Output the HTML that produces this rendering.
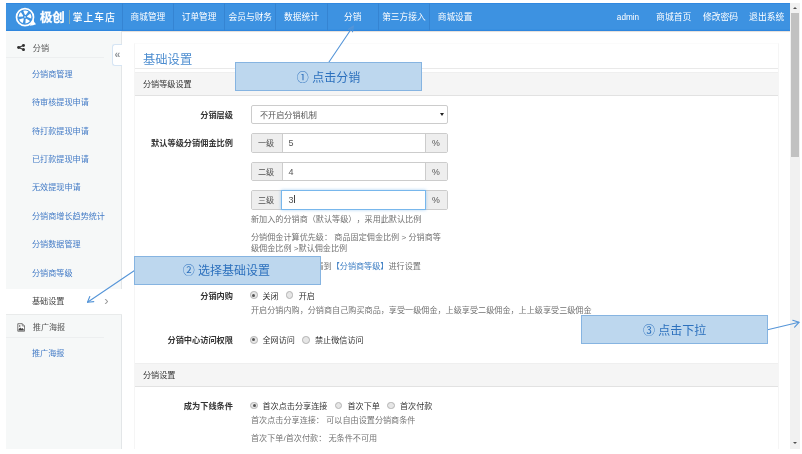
<!DOCTYPE html>
<html lang="zh-CN">
<head>
<meta charset="utf-8">
<title>基础设置</title>
<style>
html,body{margin:0;padding:0;}
body{width:802px;height:454px;overflow:hidden;background:#fff;position:relative;
  font-family:"Liberation Sans","Noto Sans CJK SC",sans-serif;font-size:8.12px;color:#333;text-spacing-trim:space-all;}
.a{position:absolute;}
.t{position:absolute;white-space:nowrap;line-height:12px;height:12px;}
/* header */
#hd{left:6px;top:3px;width:784px;height:28.3px;background:#3d92e1;box-shadow:inset 0 1px 0 #3088e0, inset 0 -1.2px 0 #2f86de, 0 0.6px 0.6px rgba(120,90,60,.18);}
.nv{position:absolute;top:0;height:28px;line-height:29px;width:51.2px;text-align:center;color:#fff;font-size:8.7px;
  border-left:1px solid #3584d2;box-sizing:border-box;white-space:nowrap;}
.nr{position:absolute;top:0;height:28px;line-height:29px;color:#fff;font-size:8.8px;white-space:nowrap;transform:translateX(-50%);}
/* sidebar */
#sb{left:6px;top:31px;width:116px;height:418px;background:#f6f8f8;border-right:1px solid #e3e6e8;box-sizing:border-box;}
.sh{color:#555;font-size:8.12px;left:32px;}
.si{color:#437bc6;font-size:8.12px;left:32px;}
/* main */
.lbl{font-weight:bold;font-size:8.2px;color:#333;text-align:right;width:120px;left:113px;}
.help{color:#737373;font-size:8.12px;left:251px;}
.ph{left:134.5px;width:643.5px;background:#f5f5f5;border-top:1px solid #efefef;border-bottom:1px solid #e2e2e2;box-sizing:border-box;}
.ig{left:251px;width:196.5px;height:19.5px;box-sizing:border-box;border:1px solid #ccc;border-radius:2px;background:#fff;}
.ad{position:absolute;top:0;height:17.5px;line-height:20px;overflow:hidden;text-indent:-1.5px;background:#eee;text-align:center;font-size:8.12px;color:#555;}
.rd{position:absolute;width:5.6px;height:5.6px;border:1px solid #b2b2b2;border-radius:50%;background:#e6e6e6;box-sizing:content-box;}
.rd.on::after{content:"";position:absolute;left:1.3px;top:1.3px;width:3px;height:3px;border-radius:50%;background:#555;}
.co{background:#bdd7ee;border:1px solid #86b4e1;box-sizing:border-box;color:#2c70bd;font-weight:400;font-size:12px;text-align:center;line-height:28px;white-space:nowrap;}
</style>
</head>
<body>
<div id="root" class="a" style="left:0;top:0;width:802px;height:454px;will-change:transform">
<!-- header -->
<div id="hd" class="a">
  <svg class="a" style="left:8.3px;top:3.3px" width="24" height="22" viewBox="0 0 24 22">
    <path d="M15.5 19.8 Q19.5 19.6 22 18.2 Q20 16.5 19.3 13.5 Z" fill="#fff"/>
    <circle cx="11" cy="11.2" r="8.5" fill="#3d91e0" stroke="#fff" stroke-width="1.7"/>
    <g fill="#fff">
<path d="M9.24 4.85 A6.4 6.4 0 0 1 14.39 5.57 L11.75 8.93 L10.85 8.81 Z"/>
<path d="M16.31 7.42 A6.4 6.4 0 0 1 17.21 12.55 L13.20 11.08 L13.04 10.18 Z"/>
<path d="M16.04 14.94 A6.4 6.4 0 0 1 11.45 17.38 L11.61 13.11 L12.41 12.69 Z"/>
<path d="M8.81 17.01 A6.4 6.4 0 0 1 5.07 13.40 L9.18 12.23 L9.83 12.87 Z"/>
<path d="M4.60 10.78 A6.4 6.4 0 0 1 6.89 6.10 L9.27 9.65 L8.87 10.47 Z"/>
    </g>
    <circle cx="11" cy="11" r="0.8" fill="#fff"/>
  </svg>
  <div class="t" style="left:34px;top:7.8px;line-height:14px;height:14px;font-size:12.5px;font-weight:bold;-webkit-text-stroke:0.25px #fff;color:#fff;letter-spacing:-0.3px">极创</div>
  <div class="a" style="left:63px;top:7.4px;width:1px;height:13.6px;background:#e0cf80;opacity:.45"></div>
  <div class="t" style="left:66.8px;top:8px;line-height:14px;height:14px;font-size:9.7px;letter-spacing:1.1px;color:#fff;font-weight:500;">掌上车店</div>
  <div class="nv" style="left:115.8px">商城管理</div>
  <div class="nv" style="left:167.0px">订单管理</div>
  <div class="nv" style="left:218.2px">会员与财务</div>
  <div class="nv" style="left:269.4px">数据统计</div>
  <div class="nv" style="left:320.6px">分销</div>
  <div class="nv" style="left:371.8px">第三方接入</div>
  <div class="nv" style="left:423.0px">商城设置</div>
  <div class="nr" style="left:622px;font-size:8.2px">admin</div>
  <div class="nr" style="left:667.7px">商城首页</div>
  <div class="nr" style="left:714.5px">修改密码</div>
  <div class="nr" style="left:760.7px">退出系统</div>
</div>

<!-- sidebar -->
<div id="sb" class="a"></div>
<div class="a" style="left:6px;top:57.2px;width:98px;height:1px;background:#edeff0"></div>
<div class="a" style="left:6px;top:288.8px;width:116px;height:25.2px;background:#fff"></div><div class="a" style="left:6px;top:314px;width:116px;height:1.2px;background:#e9ebeb"></div>
<div class="a" style="left:6px;top:337px;width:98px;height:1px;background:#edeff0"></div>
<svg class="a" style="left:17px;top:44px" width="8.2" height="7.2" viewBox="0 0 8.2 7.2">
  <path d="M1.6 3.5 L6.4 1.5 M1.6 3.5 L6.4 5.6" stroke="#333" stroke-width="1.1" fill="none"/>
  <circle cx="1.6" cy="3.5" r="1.5" fill="#333"/><circle cx="6.5" cy="1.5" r="1.5" fill="#333"/><circle cx="6.5" cy="5.6" r="1.5" fill="#333"/>
</svg>
<div class="t sh" style="top:43px;left:32.8px">分销</div>
<div class="t si" style="top:69px">分销商管理</div>
<div class="t si" style="top:97px">待审核提现申请</div>
<div class="t si" style="top:126px">待打款提现申请</div>
<div class="t si" style="top:154px">已打款提现申请</div>
<div class="t si" style="top:182px">无效提现申请</div>
<div class="t si" style="top:211px">分销商增长趋势统计</div>
<div class="t si" style="top:239px">分销数据管理</div>
<div class="t si" style="top:268px">分销商等级</div>
<div class="t si" style="top:296px;color:#444">基础设置</div>
<div class="t" style="left:104.2px;top:295px;color:#999;font-size:13px">›</div>
<svg class="a" style="left:17px;top:322.5px" width="8.4" height="9" viewBox="0 0 8.4 9">
  <path d="M0.8 0.7 H5.3 L7.6 3 V8.2 H0.8 Z" fill="#fff" stroke="#555" stroke-width="0.8"/>
  <path d="M5.3 0.7 V3 H7.6" fill="none" stroke="#555" stroke-width="0.6"/>
  <path d="M1.6 7.4 V6.2 L3.2 4.6 L4.4 5.8 L5.4 5 L6.8 6.4 V7.4 Z" fill="#444"/><circle cx="2.7" cy="3" r="0.8" fill="#444"/>
</svg>
<div class="t sh" style="top:322px;left:32.8px">推广海报</div>
<div class="t si" style="top:348px">推广海报</div>
<!-- collapse handle -->
<div class="a" style="left:112px;top:43.5px;width:10px;height:22px;background:#fff;border:1px solid #d6e5f4;border-right:none;border-radius:3px 0 0 3px;box-sizing:border-box"></div>
<div class="t" style="left:114.6px;top:47.6px;color:#8f9499;font-size:10.5px;font-weight:bold">«</div>

<!-- main -->
<div class="a" style="left:134px;top:43.3px;width:645.3px;height:406px;border:1px solid #f5f5f5;border-top-color:#fbfbfb;border-bottom:none;box-sizing:border-box"></div>
<div class="t" style="left:143px;top:52px;height:16px;line-height:16px;font-size:12.3px;color:#4d8dd0">基础设置</div>
<div class="a" style="left:134.5px;top:67.6px;width:643.5px;height:1.4px;background:#e9e9e9"></div>
<div class="a ph" style="top:72px;height:24px"></div>
<div class="t" style="left:143px;top:79px;color:#333">分销等级设置</div>

<div class="t lbl" style="top:110px">分销层级</div>
<div class="a ig" style="top:105px;height:19px"></div>
<div class="t" style="left:260px;top:110px;color:#555">不开启分销机制</div>
<div class="a" style="left:440px;top:112.6px;width:0;height:0;border-left:2.2px solid transparent;border-right:2.2px solid transparent;border-top:3px solid #222"></div>

<div class="t lbl" style="top:138px">默认等级分销佣金比例</div>
<div class="a ig" style="top:133px"><div class="ad" style="left:0;width:29.6px;border-right:1px solid #ccc">一级</div><div class="ad" style="right:0;width:21px;border-left:1px solid #ccc;font-size:8.8px;text-indent:0;line-height:18.5px">%</div></div>
<div class="t" style="left:288.5px;top:137px;color:#555;font-size:9px">5</div>
<div class="a ig" style="top:161.7px"><div class="ad" style="left:0;width:29.6px;border-right:1px solid #ccc">二级</div><div class="ad" style="right:0;width:21px;border-left:1px solid #ccc;font-size:8.8px;text-indent:0;line-height:18.5px">%</div></div>
<div class="t" style="left:288.5px;top:166px;color:#555;font-size:9px">4</div>
<div class="a ig" style="top:190px"><div class="ad" style="left:0;width:29.6px;border-right:1px solid #ccc">三级</div><div class="ad" style="right:0;width:21px;border-left:1px solid #ccc;font-size:8.8px;text-indent:0;line-height:18.5px">%</div></div>
<div class="a" style="left:281px;top:190px;width:145px;height:20px;box-sizing:border-box;border:1px solid #78b7ec;box-shadow:0 0 3px rgba(102,175,233,.55);background:#fff"></div>
<div class="t" style="left:288.5px;top:194px;color:#555;font-size:9px">3</div>
<div class="a" style="left:293.6px;top:195.3px;width:0.8px;height:8px;background:#444"></div>

<div class="t help" style="top:214px">新加入的分销商（默认等级），采用此默认比例</div>
<div class="t help" style="top:232px">分销佣金计算优先级： 商品固定佣金比例 &gt; 分销商等</div>
<div class="t help" style="top:243px">级佣金比例 &gt;默认佣金比例</div>
<div class="t help" style="top:261px;left:250.6px">分销商等级比例，请到<span style="color:#3f7fc4">【分销商等级】</span>进行设置</div>

<div class="t lbl" style="top:291px">分销内购</div>
<div class="rd on" style="left:250.2px;top:291.4px"></div>
<div class="t" style="left:262.5px;top:291px">关闭</div>
<div class="rd" style="left:285.7px;top:291.4px"></div>
<div class="t" style="left:298.7px;top:291px">开启</div>
<div class="t help" style="top:305px">开启分销内购，分销商自己购买商品，享受一级佣金，上级享受二级佣金，上上级享受三级佣金</div>

<div class="t lbl" style="top:335px">分销中心访问权限</div>
<div class="rd on" style="left:250.1px;top:336.2px"></div>
<div class="t" style="left:262.5px;top:335px">全网访问</div>
<div class="rd" style="left:302.4px;top:336.2px"></div>
<div class="t" style="left:315px;top:335px">禁止微信访问</div>

<div class="a ph" style="top:363px;height:24px"></div>
<div class="t" style="left:143px;top:370px;color:#333">分销设置</div>

<div class="t lbl" style="top:401px">成为下线条件</div>
<div class="rd on" style="left:250.4px;top:401.7px"></div>
<div class="t" style="left:262.5px;top:401px">首次点击分享连接</div>
<div class="rd" style="left:334.9px;top:401.7px"></div>
<div class="t" style="left:347.5px;top:401px">首次下单</div>
<div class="rd" style="left:387.4px;top:401.7px"></div>
<div class="t" style="left:400px;top:401px">首次付款</div>
<div class="t help" style="top:415px">首次点击分享连接： 可以自由设置分销商条件</div>
<div class="t help" style="top:433px">首次下单/首次付款： 无条件不可用</div>

<!-- scrollbar -->
<div class="a" style="left:790.2px;top:3px;width:9.6px;height:446px;background:#f1f1f1"></div>
<div class="a" style="left:791.2px;top:13px;width:7.6px;height:144px;background:#c1c1c1"></div>
<div class="a" style="left:792.9px;top:7.2px;width:0;height:0;border-left:2.2px solid transparent;border-right:2.2px solid transparent;border-bottom:2.4px solid #505050"></div>
<div class="a" style="left:792.8px;top:442.3px;width:0;height:0;border-left:2.2px solid transparent;border-right:2.2px solid transparent;border-top:2.4px solid #505050"></div>

<!-- callouts -->
<svg class="a" style="left:0;top:0" width="802" height="454" viewBox="0 0 802 454">
  <g stroke="#5595d8" stroke-width="1.1" fill="none" stroke-linecap="round" stroke-linejoin="round">
    <path d="M329 62 L353.3 26"/>
    <path d="M348.6 29.2 L353.3 26 L352.5 31.8"/>
    <path d="M134.5 270.5 L87.5 302.3"/>
    <path d="M89.8 296.5 L87.5 302.3 L93.8 301.6"/>
    <path d="M767.6 329.7 L799 322.3"/>
    <path d="M792.8 320.2 L799 322.3 L794.6 327.2"/>
  </g>
</svg>
<div class="a co" style="left:235px;top:62px;width:187px;height:29px;line-height:30px">① 点击分销</div>
<div class="a co" style="left:133.5px;top:256px;width:187.7px;height:28.7px;line-height:29px;padding-right:2px">② 选择基础设置</div>
<div class="a co" style="left:581.3px;top:315px;width:186.5px;height:28.5px;line-height:31px">③ 点击下拉</div>
</div>
</body>
</html>
